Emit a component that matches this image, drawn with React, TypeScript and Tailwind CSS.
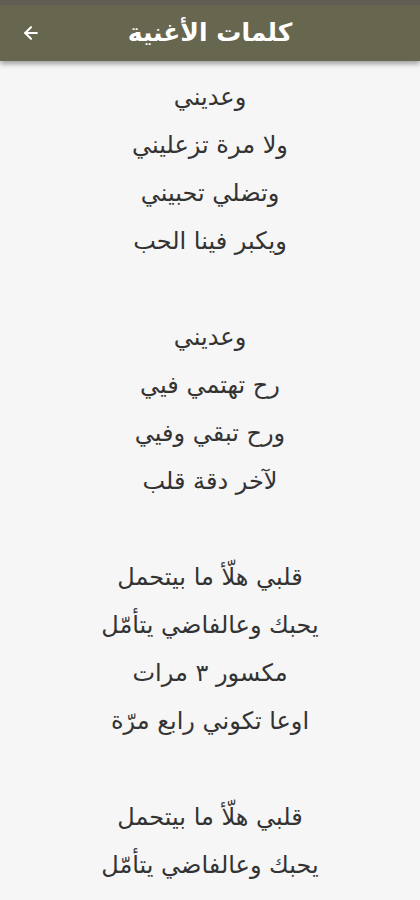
import React from 'react';
import { ArrowLeft } from 'lucide-react';

const stanzas: string[][] = [
  ['وعديني', 'ولا مرة تزعليني', 'وتضلي تحبيني', 'ويكبر فينا الحب'],
  ['وعديني', 'رح تهتمي فيي', 'ورح تبقي وفيي', 'لآخر دقة قلب'],
  ['قلبي هلّأ ما بيتحمل', 'يحبك وعالفاضي يتأمّل', 'مكسور ٣ مرات', 'اوعا تكوني رابع مرّة'],
  ['قلبي هلّأ ما بيتحمل', 'يحبك وعالفاضي يتأمّل'],
];

const App: React.FC = () => {
  return (
    <div className="w-[420px] h-[900px] overflow-hidden bg-[#f6f6f6]" style={{ fontFamily: '"DejaVu Sans", sans-serif' }}>
      {/* Header */}
      <div className="h-[61px] bg-[#67664f] border-t-[5px] border-[#5f5d54] shadow-[0_3px_5px_rgba(0,0,0,0.35)] flex items-center relative">
        <ArrowLeft size={20} strokeWidth={2.5} className="text-white ml-[21px]" />
        <h1 dir="rtl" className="absolute left-0 right-0 text-center text-white text-[25px] font-bold pointer-events-none">
          كلمات الأغنية
        </h1>
      </div>

      {/* Lyrics */}
      <div dir="rtl" className="pt-[12px] flex flex-col gap-[48px] text-[#333333] text-[24px] text-center">
        {stanzas.map((lines, i) => (
          <div key={i} className="flex flex-col">
            {lines.map((line, j) => (
              <p key={j} className="leading-[48px]">{line}</p>
            ))}
          </div>
        ))}
      </div>
    </div>
  );
};

export default App;
